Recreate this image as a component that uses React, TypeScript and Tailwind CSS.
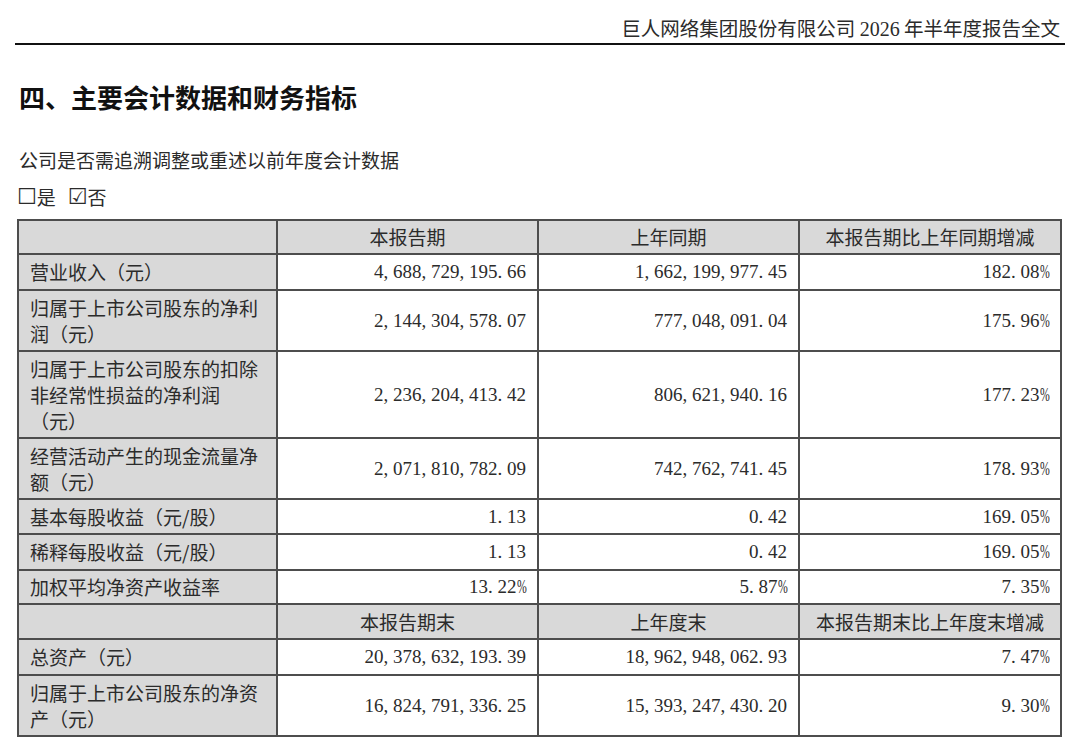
import React from 'react';

// 半年报节选：主要会计数据和财务指标
type Row = {
  label: string[];
  h: string;
  cur: string;
  prev: string;
  chg: string;
};

const topRows: Row[] = [
  { label: ['营业收入（元）'], h: 'h-[36px]', cur: '4,688,729,195.66', prev: '1,662,199,977.45', chg: '182.08%' },
  { label: ['归属于上市公司股东的净利', '润（元）'], h: 'h-[61px]', cur: '2,144,304,578.07', prev: '777,048,091.04', chg: '175.96%' },
  {
    label: ['归属于上市公司股东的扣除', '非经常性损益的净利润', '（元）'],
    h: 'h-[87px]',
    cur: '2,236,204,413.42',
    prev: '806,621,940.16',
    chg: '177.23%',
  },
  { label: ['经营活动产生的现金流量净', '额（元）'], h: 'h-[61px]', cur: '2,071,810,782.09', prev: '742,762,741.45', chg: '178.93%' },
  { label: ['基本每股收益（元/股）'], h: 'h-[35px]', cur: '1.13', prev: '0.42', chg: '169.05%' },
  { label: ['稀释每股收益（元/股）'], h: 'h-[36px]', cur: '1.13', prev: '0.42', chg: '169.05%' },
  { label: ['加权平均净资产收益率'], h: 'h-[34px]', cur: '13.22%', prev: '5.87%', chg: '7.35%' },
];

const bottomRows: Row[] = [
  { label: ['总资产（元）'], h: 'h-[36px]', cur: '20,378,632,193.39', prev: '18,962,948,062.93', chg: '7.47%' },
  { label: ['归属于上市公司股东的净资', '产（元）'], h: 'h-[61px]', cur: '16,824,791,336.25', prev: '15,393,247,430.20', chg: '9.30%' },
];

// 宋体式半角数字：每个字符占半个字宽
const Num = ({ v }: { v: string }) => (
  <span className="inline-flex font-['Liberation_Serif',serif] text-[19px]">
    {v.split('').map((c, i) =>
      c === '%' ? (
        <span key={i} className="inline-block w-[9.5px] overflow-visible">
          <span className="inline-block origin-left scale-x-[0.62]">%</span>
        </span>
      ) : (
        <span key={i} className="inline-block w-[9.5px] text-left">
          {c}
        </span>
      ),
    )}
  </span>
);

const HeadRow = ({ h, cols }: { h: string; cols: string[] }) => (
  <div className={`flex ${h} border-b-2 border-[#4d4d4d] bg-[#d9d9d9]`}>
    <div className="w-[259px] border-r-2 border-[#4d4d4d]" />
    <div className="w-[261px] border-r-2 border-[#4d4d4d] flex items-center justify-center">{cols[0]}</div>
    <div className="w-[261px] border-r-2 border-[#4d4d4d] flex items-center justify-center">{cols[1]}</div>
    <div className="w-[262px] border-r-2 border-[#4d4d4d] flex items-center justify-center">{cols[2]}</div>
  </div>
);

const DataRow = ({ r }: { r: Row }) => (
  <div className={`flex ${r.h} border-b-2 border-[#4d4d4d]`}>
    <div className="w-[259px] border-r-2 border-[#4d4d4d] bg-[#d9d9d9] pl-[11px] flex flex-col justify-center">
      {r.label.map((l) => (
        <div key={l}>{l}</div>
      ))}
    </div>
    <div className="w-[261px] border-r-2 border-[#4d4d4d] flex items-center justify-end pr-[11px]">
      <Num v={r.cur} />
    </div>
    <div className="w-[261px] border-r-2 border-[#4d4d4d] flex items-center justify-end pr-[11px]">
      <Num v={r.prev} />
    </div>
    <div className="w-[262px] border-r-2 border-[#4d4d4d] flex items-center justify-end pr-[11px]">
      <Num v={r.chg} />
    </div>
  </div>
);

export default function App() {
  return (
    <div className="w-[1080px] h-[744px] overflow-hidden bg-white text-[#2b2b2b] font-['Noto_Sans_CJK_SC',sans-serif] text-[19px] leading-[26px]">
      {/* 页眉 */}
      <div className="pt-[16px] pr-[20px] text-right text-[19.5px] leading-[24px]">
        巨人网络集团股份有限公司 <span className="font-['Liberation_Serif',serif] text-[20px]">2026</span> 年半年度报告全文
      </div>
      <div className="mx-[15px] mt-[2px] h-[2px] bg-[#111]" />

      <h1 className="mt-[36px] ml-[19px] text-[26px] leading-[32px] font-bold text-[#111]">四、主要会计数据和财务指标</h1>

      <p className="mt-[34px] ml-[19px]">公司是否需追溯调整或重述以前年度会计数据</p>

      <div className="mt-[11px] ml-[17px] flex h-[26px] items-center">
        <span className="font-['DejaVu_Sans',sans-serif] text-[22px] leading-none">☐</span>
        <span>是</span>
        <span className="ml-[12px] font-['DejaVu_Sans',sans-serif] text-[22px] leading-none">☑</span>
        <span>否</span>
      </div>

      {/* 表格 */}
      <div className="mt-[9px] ml-[17px] w-[1045px] border-t-2 border-l-2 border-[#4d4d4d]">
        <HeadRow h="h-[34px]" cols={['本报告期', '上年同期', '本报告期比上年同期增减']} />
        {topRows.map((r) => (
          <DataRow key={r.label.join('')} r={r} />
        ))}
        <HeadRow h="h-[35px]" cols={['本报告期末', '上年度末', '本报告期末比上年度末增减']} />
        {bottomRows.map((r) => (
          <DataRow key={r.label.join('')} r={r} />
        ))}
      </div>
    </div>
  );
}
